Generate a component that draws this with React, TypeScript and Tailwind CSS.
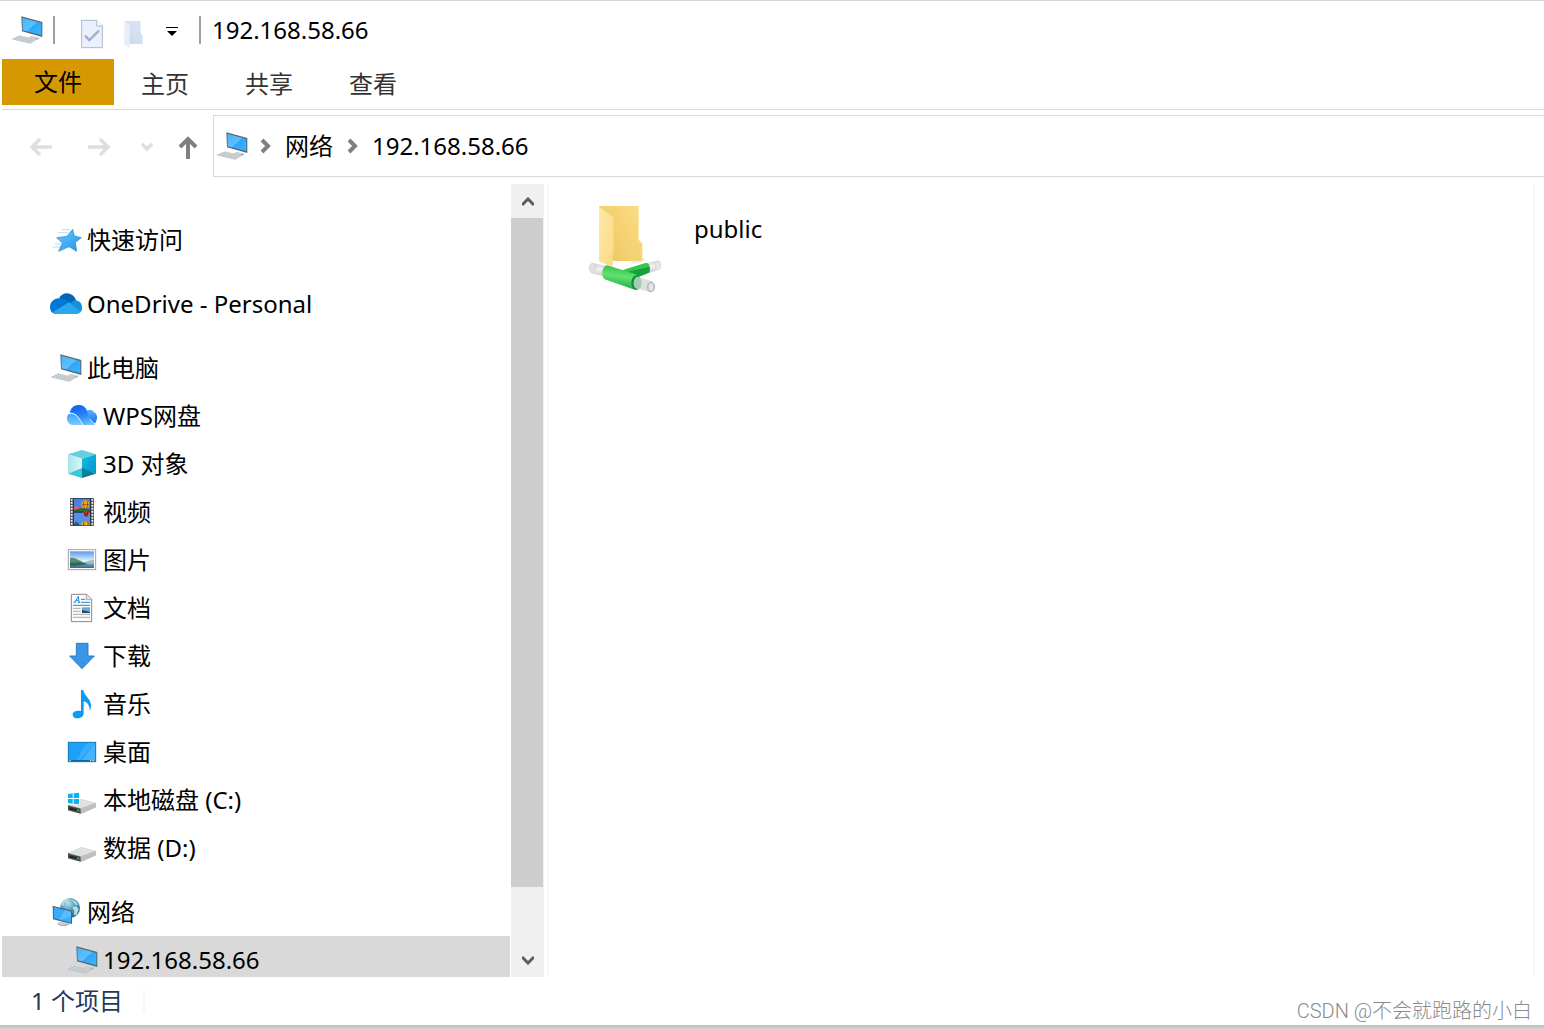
import React, { useState } from 'react';

type IconProps = { className?: string };

const PcIcon: React.FC<IconProps> = ({ className = 'w-8 h-8 shrink-0' }) => (
  <svg viewBox="0 0 96 96" className={className} aria-hidden="true">
    <defs>
      <linearGradient id="pcScreen" x1="0" y1="0" x2="1" y2="1">
        <stop offset="0" stopColor="#46b4fc" />
        <stop offset="0.5" stopColor="#5cc0ff" />
        <stop offset="0.52" stopColor="#2ea8fb" />
        <stop offset="1" stopColor="#3fb2fd" />
      </linearGradient>
    </defs>
    <path d="M50 71L62 66L86 71L82 77L62 78Z" fill="#c9ced2" />
    <path d="M56 74L68 77L82 73" stroke="#8d979f" strokeWidth="2" fill="none" />
    <path d="M31 7L94 24V69L33 52Z" fill="#56646e" />
    <path d="M34 11L91 27V64L35 49Z" fill="url(#pcScreen)" />
    <path d="M3 74L25 64L76 76L58 88Z" fill="#d5d8da" />
    <path d="M9 74L60 85M15 70L66 82M22 67L71 78" stroke="#a3abb0" strokeWidth="2" strokeDasharray="6 3" />
    <path d="M3 75L58 88L76 77" stroke="#b4babe" strokeWidth="2" fill="none" />
  </svg>
);

const StarIcon: React.FC = () => (
  <svg viewBox="0 0 96 96" className="w-8 h-8 shrink-0" aria-hidden="true">
    <defs>
      <linearGradient id="starFill" x1="0" y1="0" x2="1" y2="1">
        <stop offset="0" stopColor="#6ac8fb" />
        <stop offset="1" stopColor="#1c98ef" />
      </linearGradient>
    </defs>
    <path d="M34 17H60M22 26H56M14 60H32M8 69H30" stroke="#8ccdf3" strokeWidth="2" />
    <path d="M68 16L73 36L94 41L76 55L80 82L57 68L26 82L37 57L20 41L51 37Z" fill="url(#starFill)" stroke="#2583c6" strokeWidth="2" strokeLinejoin="round" />
  </svg>
);

const OneDriveIcon: React.FC = () => (
  <svg viewBox="0 0 96 96" className="w-8 h-8 shrink-0" aria-hidden="true">
    <path d="M27 31C34 18 49 13 61 18C69 21 75 27 78 37L66 48Z" fill="#0364b8" />
    <path d="M18 78C6 77 0 68 0 56C1 41 13 30 28 31C37 30 45 34 53 39L64 46L20 78Z" fill="#0078d4" />
    <path d="M62 46C70 36 80 35 84 39C93 42 96 50 96 60C96 65 94 69 92 72L50 50Z" fill="#1490df" />
    <path d="M8 73L57 43L93 71C89 76 84 78 78 78H20C15 78 11 76 8 73Z" fill="#28a8ea" />
  </svg>
);

const WpsIcon: React.FC = () => (
  <svg viewBox="0 0 96 96" className="w-8 h-8 shrink-0" aria-hidden="true">
    <defs>
      <linearGradient id="wpsA" x1="0.3" y1="0" x2="0.7" y2="1">
        <stop offset="0" stopColor="#0c62f0" />
        <stop offset="0.5" stopColor="#2b83f8" />
        <stop offset="1" stopColor="#6cc3ff" />
      </linearGradient>
      <linearGradient id="wpsB" x1="0.4" y1="0" x2="0.6" y2="1">
        <stop offset="0" stopColor="#5cb2ff" />
        <stop offset="1" stopColor="#1a6ff0" />
      </linearGradient>
      <linearGradient id="wpsC" x1="0" y1="0" x2="0" y2="1">
        <stop offset="0" stopColor="#3f9dff" />
        <stop offset="1" stopColor="#7bcbff" />
      </linearGradient>
    </defs>
    <path d="M62 32C70 27 80 30 83 36C91 39 94 46 93 55C92 65 87 72 80 75H66L56 40Z" fill="url(#wpsB)" />
    <path d="M12 38C13 25 24 15 38 15C51 15 59 21 63 32C67 48 76 64 89 72C85 74 81 75 75 75H44Z" fill="url(#wpsA)" />
    <path d="M3 54C3 48 6 42 11 39C29 35 38 55 50 75H22C10 75 3 67 3 54Z" fill="url(#wpsC)" />
    <path d="M9 41C29 35 40 56 51 75" stroke="#fff" strokeWidth="3" fill="none" />
    <path d="M72 57C77 65 82 69 89 73" stroke="#fff" strokeWidth="2" fill="none" />
  </svg>
);

const CubeIcon: React.FC = () => (
  <svg viewBox="0 0 96 96" className="w-8 h-8 shrink-0" aria-hidden="true">
    <defs>
      <linearGradient id="cubeL" x1="0" y1="0" x2="1" y2="0">
        <stop offset="0" stopColor="#a5e5ec" />
        <stop offset="1" stopColor="#dff5f6" />
      </linearGradient>
      <linearGradient id="cubeR" x1="0" y1="0" x2="1" y2="1">
        <stop offset="0" stopColor="#18bde0" />
        <stop offset="1" stopColor="#0093cf" />
      </linearGradient>
    </defs>
    <path d="M48 6L90 19L48 32L6 19Z" fill="#62d0e0" />
    <path d="M6 19L48 32V62L6 77Z" fill="url(#cubeL)" />
    <path d="M90 19L48 32V62L90 77Z" fill="url(#cubeR)" />
    <path d="M6 77L48 60V90Z" fill="#38c7da" />
    <path d="M90 77L48 60V90Z" fill="#087f98" />
  </svg>
);

const VideoIcon: React.FC = () => (
  <svg viewBox="0 0 96 96" className="w-8 h-8 shrink-0" aria-hidden="true">
    <rect x="12" y="6" width="72" height="84" fill="#5a5a5a" />
    <path d="M17 9V90M79 9V90" stroke="#f4f4f4" strokeWidth="5" strokeDasharray="5 4" />
    <rect x="22" y="6" width="52" height="84" fill="#17233f" />
    <rect x="24" y="8" width="48" height="38" fill="#4a80e0" />
    <rect x="24" y="50" width="48" height="38" fill="#568fe5" />
    <path d="M24 34L32 30L42 36L50 32V42H24Z" fill="#e95a6d" />
    <path d="M24 42L46 36L72 40V46H24Z" fill="#286b35" />
    <ellipse cx="58" cy="25" rx="12" ry="12" fill="#edb21b" />
    <path d="M54 15C50 24 53 32 57 38M62 14C67 24 65 32 61 38M48 26H70" stroke="#7c281e" strokeWidth="2" fill="none" />
    <path d="M50 48C54 46 67 46 71 49L64 62H58Z" fill="#d53f25" />
    <path d="M57 49V60M65 49L62 61" stroke="#292522" strokeWidth="3" />
    <path d="M46 88C46 71 70 71 71 88Z" fill="#f2b41d" />
    <path d="M53 88C52 80 55 77 58 77M63 77C67 79 67 84 66 88" stroke="#74351d" strokeWidth="3" fill="none" />
    <path d="M24 84L32 76L42 88H24Z" fill="#31558c" />
  </svg>
);

const PictureIcon: React.FC = () => (
  <svg viewBox="0 0 96 96" className="w-8 h-8 shrink-0" aria-hidden="true">
    <defs>
      <linearGradient id="sky" x1="0" y1="0" x2="0" y2="1">
        <stop offset="0" stopColor="#5a9aeb" />
        <stop offset="0.6" stopColor="#e4f5fd" />
      </linearGradient>
      <linearGradient id="lake" x1="0" y1="0" x2="0" y2="1">
        <stop offset="0" stopColor="#7fa7bd" />
        <stop offset="1" stopColor="#2f6691" />
      </linearGradient>
    </defs>
    <rect x="7" y="17" width="82" height="60" fill="#fff" stroke="#a2a2a2" strokeWidth="3" />
    <rect x="12" y="22" width="72" height="50" fill="url(#sky)" />
    <path d="M52 55C62 52 72 48 84 47V60H46Z" fill="#9dbfba" />
    <path d="M12 42C28 38 38 50 58 57L66 60L12 63Z" fill="#5a8c74" />
    <path d="M12 59H84V72H12Z" fill="url(#lake)" />
    <path d="M12 56L40 55L66 61L24 66L12 65Z" fill="#2d6658" />
  </svg>
);

const DocIcon: React.FC = () => (
  <svg viewBox="0 0 96 96" className="w-8 h-8 shrink-0" aria-hidden="true">
    <path d="M16 7H62L77 22V89H16Z" fill="#fbfbfb" stroke="#888" strokeWidth="3" />
    <path d="M61 8V23H76" fill="#e9e9e9" stroke="#888" strokeWidth="2" />
    <path d="M26 31L37 13L39 31M30 25H38M23 31H29M35 31H42" stroke="#2389cb" strokeWidth="3" fill="none" />
    <path d="M45 22H57M45 31H72M21 40H72" stroke="#2389cb" strokeWidth="3" />
    <path d="M21 49H44M21 58H44M21 67H72M21 76H72" stroke="#aaa" strokeWidth="3" />
    <rect x="48" y="46" width="24" height="17" fill="#6ba6dc" />
    <path d="M48 54L72 60V63H48Z" fill="#1c4b55" />
  </svg>
);

const DownloadIcon: React.FC = () => (
  <svg viewBox="0 0 96 96" className="w-8 h-8 shrink-0" aria-hidden="true">
    <path d="M31 10H66V48H85L48 86L11 48H31Z" fill="#3996e6" stroke="#2a7fc9" strokeWidth="3" />
  </svg>
);

const MusicIcon: React.FC = () => (
  <svg viewBox="0 0 96 96" className="w-8 h-8 shrink-0" aria-hidden="true">
    <path d="M45 6H52C54 24 76 32 75 54C75 59 74 64 71 68C71 53 65 43 53 40V76C53 85 45 91 34 91C25 91 20 86 20 80C20 71 32 66 45 69Z" fill="#0c9bf3" />
  </svg>
);

const DesktopIcon: React.FC = () => (
  <svg viewBox="0 0 96 96" className="w-8 h-8 shrink-0" aria-hidden="true">
    <rect x="7" y="19" width="82" height="58" fill="#1ba1fb" stroke="#0876b9" strokeWidth="3" />
    <path d="M87 21L48 72H87Z" fill="#45b4fd" />
    <path d="M51 21H87L43 72H30C43 60 45 35 67 21Z" fill="#35adfd" />
    <path d="M9 74H87" stroke="#075a8e" strokeWidth="3" />
    <path d="M10 74H14M72 74H75M77 74H80M82 74H85" stroke="#fff" strokeWidth="3" />
  </svg>
);

const DriveIcon: React.FC<{ system?: boolean }> = ({ system }) => (
  <svg viewBox="0 0 96 96" className="w-8 h-8 shrink-0" aria-hidden="true">
    <path d="M6 63L46 46L90 57V69L46 89L6 79Z" fill="#b7b9bb" />
    <path d="M6 63L46 46L90 57L44 73Z" fill="#dfe0e2" />
    <path d="M6 64L44 74V89L6 79Z" fill="#4a4c4d" />
    <path d="M10 70L33 76V82L10 76Z" fill="#202223" />
    <path d="M33 79L38 80" stroke="#35df45" strokeWidth="4" />
    <path d="M44 74L90 58V70L46 89Z" fill="#bcbec0" />
    {system && (
      <g>
        <path d="M3 23H42V62H3Z" fill="#fff" />
        <path d="M6 30L20 28V42H6ZM23 28L39 26V42H23ZM6 45H20V59L6 57ZM23 45H39V61L23 59Z" fill="#09b4ee" />
      </g>
    )}
  </svg>
);

const NetworkIcon: React.FC = () => (
  <svg viewBox="0 0 96 96" className="w-8 h-8 shrink-0" aria-hidden="true">
    <defs>
      <radialGradient id="globe" cx="0.4" cy="0.25" r="0.8">
        <stop offset="0" stopColor="#b9e0ec" />
        <stop offset="0.5" stopColor="#4c9aba" />
        <stop offset="1" stopColor="#235f83" />
      </radialGradient>
    </defs>
    <circle cx="60" cy="36" r="30" fill="url(#globe)" />
    <path d="M33 24L44 10L56 8L53 17L43 20L39 31ZM64 10L77 16L85 27L77 26L71 18ZM67 34L79 31L86 39L80 56L72 58L73 45Z" fill="#b9dce4" />
    <path d="M20 82L38 76L60 84L50 89L33 90Z" fill="#c9ced2" />
    <path d="M23 84C33 90 45 90 57 84" stroke="#8c969d" strokeWidth="2" fill="none" />
    <path d="M8 29L66 44V84L9 70Z" fill="#43647c" />
    <path d="M11 33L63 47V80L12 67Z" fill="#37acfb" />
    <path d="M63 47V62L28 71L43 42Z" fill="#5abcff" />
  </svg>
);

const SharedFolderIcon: React.FC = () => (
  <svg viewBox="45 36 240 288" className="w-20 h-24 shrink-0" aria-hidden="true">
    <defs>
      <linearGradient id="folderBack" x1="0" y1="0.7" x2="1" y2="0">
        <stop offset="0" stopColor="#edc863" />
        <stop offset="1" stopColor="#fddd85" />
      </linearGradient>
      <linearGradient id="folderFront" x1="0" y1="0" x2="1" y2="1">
        <stop offset="0" stopColor="#ffe9a9" />
        <stop offset="1" stopColor="#fbd981" />
      </linearGradient>
      <linearGradient id="pipe" x1="0.6" y1="0" x2="0.4" y2="1">
        <stop offset="0" stopColor="#2cba48" />
        <stop offset="0.45" stopColor="#62e270" />
        <stop offset="1" stopColor="#16a53a" />
      </linearGradient>
      <linearGradient id="tube" x1="0" y1="0" x2="0" y2="1">
        <stop offset="0" stopColor="#cfcfcf" />
        <stop offset="0.45" stopColor="#f3f3f3" />
        <stop offset="1" stopColor="#c8c8c8" />
      </linearGradient>
    </defs>
    <path d="M190 213L217 203L229 211L180 223Z" fill="#ececec" />
    <path d="M87 48H206V150L217 160V213H108L87 195Z" fill="url(#folderBack)" />
    <path d="M87 50L131 83V188L128 192V231L87 214Z" fill="url(#folderFront)" />
    <path d="M229 220L261 212C269 210 273 220 273 228C273 234 271 238 267 239L237 249Z" fill="url(#tube)" />
    <ellipse cx="264" cy="226" rx="8" ry="13" fill="#e6e6e6" stroke="#d1d1d1" strokeWidth="2" />
    <path d="M158 240L224 220C237 216 242 229 239 246L201 261L176 269Z" fill="#34c84b" />
    <path d="M169 247L238 230C240 237 239 243 236 249L199 263Z" fill="#169f3b" />
    <path d="M69 219L107 228L101 259L66 250C55 244 54 222 69 219Z" fill="url(#tube)" />
    <ellipse cx="68" cy="235" rx="10" ry="15" fill="#e1e1e1" stroke="#cfcfcf" strokeWidth="2" />
    <path d="M111 226L198 253C211 260 210 296 194 299L104 268C91 259 96 226 111 226Z" fill="url(#pipe)" />
    <ellipse cx="199" cy="278" rx="15" ry="22" fill="#138a42" />
    <path d="M202 260L246 274C258 281 256 306 241 307L197 295C188 285 190 264 202 260Z" fill="#d8dfdc" opacity="0.94" />
    <path d="M202 261C190 266 188 286 196 294L209 297C216 288 216 271 211 264Z" fill="#a3cdb2" />
    <ellipse cx="243" cy="291" rx="10" ry="14" fill="#d6d6d6" stroke="#aaa" strokeWidth="3" />
    <ellipse cx="243" cy="292" rx="6" ry="10" fill="#e6e6e6" />
  </svg>
);

const Crumb: React.FC = () => (
  <svg viewBox="0 0 12 16" className="w-3 h-4 shrink-0" aria-hidden="true">
    <path d="M2 2L8 8L2 14" stroke="#808080" strokeWidth="4" fill="none" />
  </svg>
);

interface TreeItem {
  label: string;
  icon: React.ReactNode;
  child?: boolean;
}

const groups: TreeItem[][] = [
  [{ label: '快速访问', icon: <StarIcon /> }],
  [{ label: 'OneDrive - Personal', icon: <OneDriveIcon /> }],
  [
    { label: '此电脑', icon: <PcIcon /> },
    { label: 'WPS网盘', icon: <WpsIcon />, child: true },
    { label: '3D 对象', icon: <CubeIcon />, child: true },
    { label: '视频', icon: <VideoIcon />, child: true },
    { label: '图片', icon: <PictureIcon />, child: true },
    { label: '文档', icon: <DocIcon />, child: true },
    { label: '下载', icon: <DownloadIcon />, child: true },
    { label: '音乐', icon: <MusicIcon />, child: true },
    { label: '桌面', icon: <DesktopIcon />, child: true },
    { label: '本地磁盘 (C:)', icon: <DriveIcon system />, child: true },
    { label: '数据 (D:)', icon: <DriveIcon />, child: true },
  ],
  [
    { label: '网络', icon: <NetworkIcon /> },
    { label: '192.168.58.66', icon: <PcIcon />, child: true },
  ],
];

const tabs = ['主页', '共享', '查看'];

export default function App() {
  const [selected, setSelected] = useState('192.168.58.66');

  return (
    <div className="h-screen flex flex-col overflow-hidden bg-white border-t border-[#d6d6d6] text-black text-[24px] leading-8 font-['Noto_Sans','Noto_Sans_CJK_SC',sans-serif]">
      {/* Title bar */}
      <header className="h-[58px] shrink-0 flex items-center pl-[11px]">
        <PcIcon />
        <span className="w-[2px] h-7 ml-[10px] bg-[#a0a0a0]" />
        <button aria-label="属性" className="ml-[26px] mt-2">
          <svg viewBox="0 0 66 90" className="w-[22px] h-[30px]" aria-hidden="true">
            <path d="M2 4H47L64 21V86H2Z" fill="#eaf1fb" stroke="#a9b8d3" strokeWidth="3" />
            <path d="M47 4V21H64" fill="#fff" stroke="#a9b8d3" strokeWidth="3" />
            <path d="M12 50L25 63L54 35" stroke="#9fb0cf" strokeWidth="7" fill="none" />
          </svg>
        </button>
        <button aria-label="新建文件夹" className="ml-[21px] mt-2">
          <svg viewBox="0 0 60 84" className="w-5 h-7" aria-hidden="true">
            <defs>
              <linearGradient id="qatFolder" x1="0" y1="1" x2="1" y2="0">
                <stop offset="0" stopColor="#c8d8ea" />
                <stop offset="1" stopColor="#dce7f4" />
              </linearGradient>
            </defs>
            <path d="M2 3H50V40L56 46V72H2Z" fill="url(#qatFolder)" />
            <path d="M2 3L17 14V83L2 73Z" fill="#e6eef8" />
          </svg>
        </button>
        <button aria-label="自定义快速访问工具栏" className="ml-[22px] mt-1">
          <svg viewBox="0 0 12 10" className="w-3 h-[10px]" aria-hidden="true">
            <path d="M0 0H12V1H0ZM1 4H11L6 9Z" fill="#000" />
          </svg>
        </button>
        <span className="w-[2px] h-7 ml-[21px] bg-[#a0a0a0]" />
        <h1 className="ml-[11px]">192.168.58.66</h1>
      </header>

      {/* Ribbon tabs */}
      <nav className="h-[51px] shrink-0 ml-[2px] flex items-start border-b border-[#dadbdc] text-[#333]">
        <button className="w-28 h-[46px] bg-[#d69800] text-black">文件</button>
        {tabs.map(tab => (
          <button key={tab} className="w-[104px] h-[50px] pr-[2px]">{tab}</button>
        ))}
      </nav>

      {/* Address row */}
      <div className="shrink-0 flex items-center pt-[5px] pb-[7px]">
        <div className="w-[213px] shrink-0 flex items-center pl-[29px] pt-[2px]">
          <button aria-label="后退">
            <svg viewBox="0 0 24 20" className="w-6 h-5" fill="none" stroke="#dedede" strokeWidth="3.5" aria-hidden="true">
              <path d="M23 10H3M11 2L3 10L11 18" />
            </svg>
          </button>
          <button aria-label="前进" className="ml-[34px]">
            <svg viewBox="0 0 24 20" className="w-6 h-5" fill="none" stroke="#dedede" strokeWidth="3.5" aria-hidden="true">
              <path d="M1 10H21M13 2L21 10L13 18" />
            </svg>
          </button>
          <button aria-label="最近浏览的位置" className="ml-[29px]">
            <svg viewBox="0 0 14 10" className="w-[14px] h-[10px]" fill="none" stroke="#dedede" strokeWidth="3.5" aria-hidden="true">
              <path d="M2 2L7 7L12 2" />
            </svg>
          </button>
          <button aria-label="上移" className="ml-[24px]">
            <svg viewBox="0 0 20 24" className="w-5 h-6" fill="none" stroke="#808080" strokeWidth="4" aria-hidden="true">
              <path d="M10 24V4M2 12L10 4L18 12" />
            </svg>
          </button>
        </div>
        <div className="flex-1 h-[62px] flex items-center border border-r-0 border-[#d9d9d9] pl-[2px]">
          <PcIcon />
          <span className="flex ml-3"><Crumb /></span>
          <button className="ml-[13px]">网络</button>
          <span className="flex ml-[14px]"><Crumb /></span>
          <button className="ml-[13px]">192.168.58.66</button>
        </div>
      </div>

      {/* Navigation tree and folder contents */}
      <div className="flex-1 min-h-0 flex">
        <nav className="w-[510px] shrink-0 overflow-hidden pl-[2px] pt-8">
          <div className="flex flex-col gap-4">
            {groups.map(group => (
              <ul key={group[0].label}>
                {group.map(item => (
                  <li key={item.label}>
                    <button
                      onClick={() => setSelected(item.label)}
                      className={`w-full h-12 flex items-center gap-[5px] text-left whitespace-nowrap ${item.child ? 'pl-16' : 'pl-12'} ${selected === item.label ? 'bg-[#d9d9d9]' : ''}`}
                    >
                      {item.icon}
                      <span>{item.label}</span>
                    </button>
                  </li>
                ))}
              </ul>
            ))}
          </div>
        </nav>

        {/* Scrollbar */}
        <div className="w-[33px] ml-px shrink-0 flex flex-col bg-[#f0f0f0]">
          <button aria-label="向上滚动" className="h-[34px] shrink-0 flex items-center justify-center pt-[2px]">
            <svg viewBox="0 0 12 10" className="w-3 h-[10px]" fill="none" stroke="#5c5c5c" strokeWidth="3" aria-hidden="true">
              <path d="M0 8L6 2L12 8" />
            </svg>
          </button>
          <div className="flex-12 mr-px bg-[#cdcdcd]" />
          <div className="flex-1" />
          <button aria-label="向下滚动" className="h-[34px] shrink-0 flex items-center justify-center">
            <svg viewBox="0 0 12 10" className="w-3 h-[10px]" fill="none" stroke="#5c5c5c" strokeWidth="3" aria-hidden="true">
              <path d="M0 2L6 8L12 2" />
            </svg>
          </button>
        </div>

        <main className="flex-1 ml-[3px] mr-[9px] border-x-2 border-[#f7f7f7] pl-9 pt-[18px]">
          <button className="flex items-start gap-[29px] text-left">
            <SharedFolderIcon />
            <span className="mt-[11px]">public</span>
          </button>
        </main>
      </div>

      {/* Status bar */}
      <footer className="h-12 shrink-0 flex items-center pl-[31px] pr-3 text-[#1e395b]">
        <span>1 个项目</span>
        <span className="w-[2px] h-[22px] ml-5 bg-[#f5f5f5]" />
        <span className="ml-auto mt-5 text-[20px] leading-6 text-[#8a8a8a] font-[Roboto,'Noto_Sans_CJK_SC',sans-serif] font-light">CSDN @不会就跑路的小白</span>
      </footer>
      <div className="h-[5px] shrink-0 bg-linear-to-b from-[#bcbcbc] to-[#d8d8d8]" />
    </div>
  );
}
